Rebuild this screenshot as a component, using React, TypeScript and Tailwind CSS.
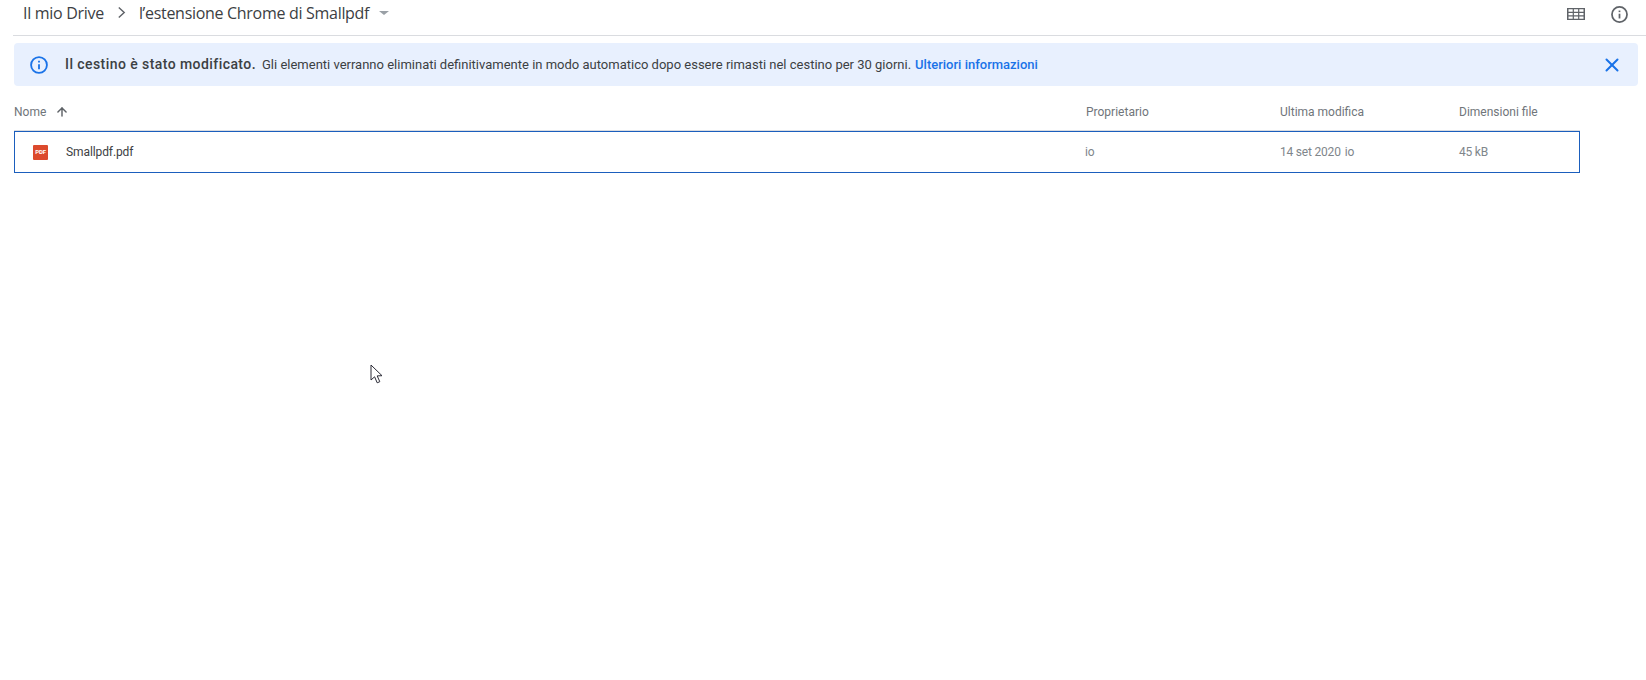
import { ArrowUp, X } from 'lucide-react';

function InfoIcon({ className }: { className: string }) {
  return (
    <svg viewBox="0 0 24 24" className={className} fill="none" stroke="currentColor" strokeWidth="2.200">
      <circle cx="12" cy="12" r="9.500" />
      <path d="M12 11v6" />
      <path d="M12 7v2" />
    </svg>
  );
}

function GridIcon() {
  return (
    <svg viewBox="0 0 18 12" className="w-[18px] h-[12px] text-[#5f6368]" fill="currentColor">
      <path d="M0 0h18v12H0zM1.500 3.800h4.200V1.300H1.500zm5.400 0h4.200V1.300H6.900zm5.400 0h4.200V1.300h-4.200zM1.500 7.200h4.200V5H1.500zm5.400 0h4.200V5H6.900zm5.400 0h4.200V5h-4.200zM1.500 10.800h4.200V8.400H1.500zm5.400 0h4.200V8.400H6.900zm5.400 0h4.200V8.400h-4.200z" fillRule="evenodd" />
    </svg>
  );
}

function PdfIcon() {
  return (
    <div className="w-[15px] h-[15px] rounded-[1px] bg-[#dc4a2d] flex items-center justify-center text-white text-[6px] font-bold leading-none">
      PDF
    </div>
  );
}

function Cursor() {
  return (
    <svg viewBox="0 0 14 20" className="absolute left-[370px] top-[364px] w-[14px] h-[20px]">
      <path d="M1 1v15l3.600-3.200 2.600 6 2.600-1.100-2.600-5.800 4.800-.2z" fill="#fff" stroke="#2a2a35" strokeWidth="1" />
    </svg>
  );
}

export default function App() {
  return (
    <div className="relative w-[1646px] h-[680px] bg-white overflow-hidden font-['Roboto',sans-serif]">
      <div className="ml-[13px] h-[36px] border-b border-[#dadce0] flex items-center justify-between pb-[10px] pl-[10px] pr-[17px]">
        <div className="flex items-center text-[16px] text-[#3c4043] font-['Open_Sans',sans-serif] tracking-[-0.3px]">
          <span>Il mio Drive</span>
          <svg viewBox="0 0 10 14" className="w-[9px] h-[13px] ml-[13px] mr-[13px] text-[#5f6368]" fill="none" stroke="currentColor" strokeWidth="1.600">
            <path d="M2 1.500 8 7l-6 5.500" />
          </svg>
          <span>l’estensione Chrome di Smallpdf</span>
          <div className="ml-[10px] w-0 h-0 border-x-[5px] border-x-transparent border-t-[4px] border-t-[#9aa0a6]" />
        </div>
        <div className="flex items-center gap-[25px] mt-[3px]">
          <GridIcon />
          <InfoIcon className="w-[19px] h-[19px] text-[#5f6368]" />
        </div>
      </div>

      <div className="mt-[7px] ml-[14px] mr-[8px] h-[43px] rounded-[4px] bg-[#e8f0fe] flex items-center pl-[15px] pr-[15px]">
        <InfoIcon className="w-[20px] h-[20px] text-[#1a73e8]" />
        <span className="ml-[16px] text-[14px] font-medium tracking-[0.43px] text-[#3c4043]">Il cestino è stato modificato.</span>
        <span className="ml-[6px] text-[13px] text-[#3c4043]">
          Gli elementi verranno eliminati definitivamente in modo automatico dopo essere rimasti nel cestino per 30 giorni.
        </span>
        <span className="ml-[4px] text-[13px] font-medium text-[#1a73e8]">Ulteriori informazioni</span>
        <X className="ml-auto w-[22px] h-[22px] text-[#1a73e8]" strokeWidth={2.200} />
      </div>

      <div className="ml-[14px] w-[1566px] h-[45px] pt-[7px] border-b border-[#dadce0] flex items-center text-[12px] text-[#70757a]">
        <div className="w-[1072px] flex items-center gap-[9px]">
          <span>Nome</span>
          <ArrowUp className="w-[14px] h-[14px] text-[#5f6368]" strokeWidth={2.500} />
        </div>
        <div className="w-[194px]">Proprietario</div>
        <div className="w-[179px]">Ultima modifica</div>
        <div>Dimensioni file</div>
      </div>

      <div className="ml-[14px] w-[1566px] h-[42px] border border-[#1b5ebd] flex items-center text-[12px] text-[#80868b] tracking-[-0.2px]">
        <div className="w-[1070px] flex items-center pl-[18px]">
          <PdfIcon />
          <span className="ml-[18px] text-[#3c4043] tracking-[-0.1px]">Smallpdf.pdf</span>
        </div>
        <div className="w-[195px]">io</div>
        <div className="w-[179px] flex gap-[4px]">
          <span>14 set 2020</span>
          <span>io</span>
        </div>
        <div>45 kB</div>
      </div>

      <Cursor />
    </div>
  );
}
